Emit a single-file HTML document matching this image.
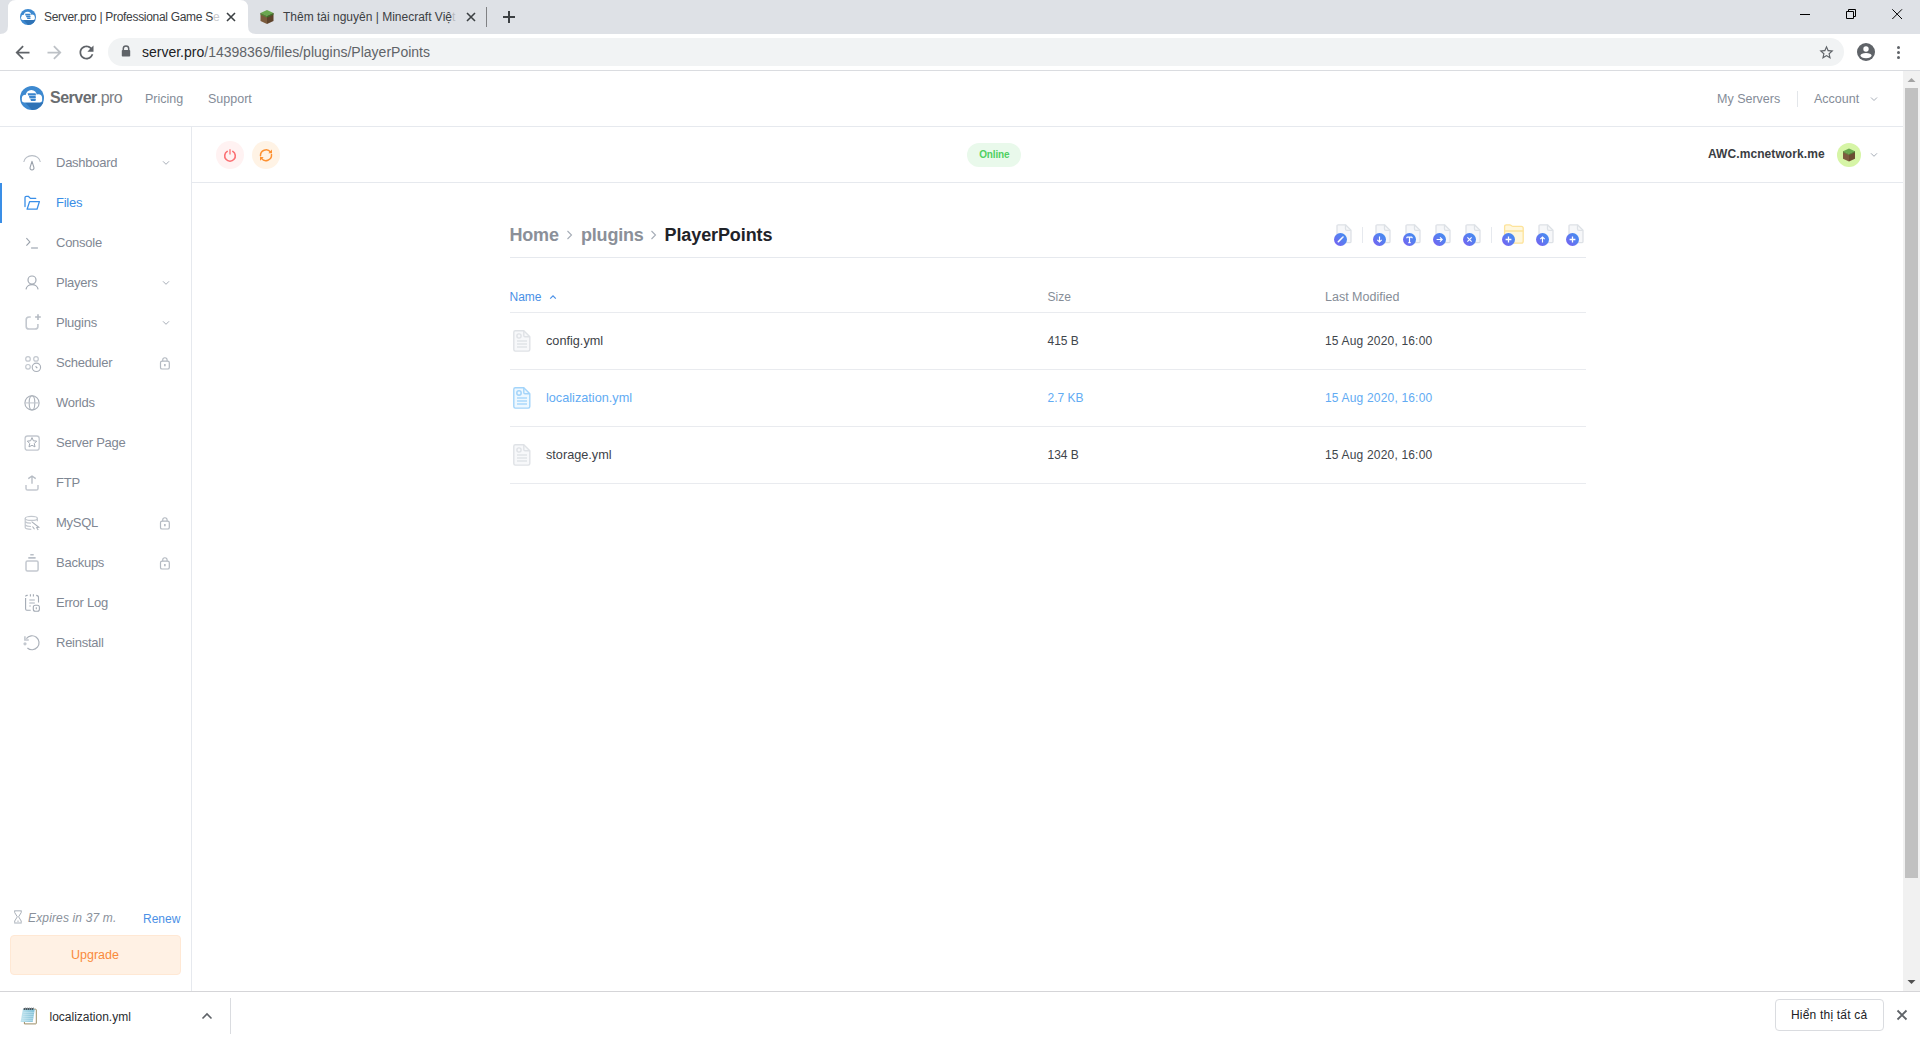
<!DOCTYPE html>
<html><head><meta charset="utf-8">
<style>
*{box-sizing:border-box;margin:0;padding:0}
html,body{width:1920px;height:1040px;overflow:hidden;background:#fff;font-family:"Liberation Sans",sans-serif;position:relative}
.a{position:absolute}
.t{position:absolute;white-space:nowrap;line-height:1}
svg{position:absolute;overflow:visible}
#tabbar{left:0;top:0;width:1920px;height:34px;background:#dee1e6}
#tbsep{left:0;top:70px;width:1920px;height:1px;background:#dadce0}
#omni{left:108px;top:38px;width:1736px;height:28px;border-radius:14px;background:#f1f3f4}
#hdr{left:0;top:126px;width:1903px;height:1px;background:#e6e9ee}
#side{left:191px;top:127px;width:1px;height:864px;background:#e6e9ee}
#ctl{left:192px;top:182px;width:1711px;height:1px;background:#e6e9ee}
#scroll{left:1903px;top:71px;width:17px;height:920px;background:#f1f1f1}
#shelf{left:0;top:991px;width:1920px;height:49px;background:#fff;border-top:1px solid #d5d5d8}
.ni{left:56px;font-size:13px;color:#7f8793;letter-spacing:-0.25px}
.si{left:16px}
.lk{left:159px}
.bdg{width:13px;height:13px;border-radius:50%;background:linear-gradient(45deg,#7a5cf2 0%,#5b7cf0 50%,#3d8ff0 100%)}
</style></head><body>
<!-- CHROME -->
<div id="tabbar" class="a"></div>
<svg style="left:0;top:0" width="260" height="34"><path d="M0 34 Q8 34 8 26 L8 8 Q8 0 16 0 L240 0 Q248 0 248 8 L248 26 Q248 34 256 34 Z" fill="#fff"/></svg>
<!-- favicon 1 -->
<svg style="left:20px;top:9px" width="16" height="16" viewBox="0 0 24 24"><defs><clipPath id="fc"><circle cx="12" cy="12" r="12"/></clipPath></defs><circle cx="12" cy="12" r="12" fill="#3d89d0"/><path d="M5.3 16.6 H25 V25 H12.8 Z" fill="#2f73b6" clip-path="url(#fc)"/><g fill="#fff"><circle cx="11.3" cy="9.5" r="5.5"/><circle cx="5.5" cy="12.4" r="3.6"/><circle cx="18.3" cy="12" r="3.8"/><path d="M1.9 12.4 H22.1 V14.3 Q22.1 16.6 19.8 16.6 H4.3 Q1.9 16.6 1.9 14.3 Z"/></g><g fill="#3a84cc"><path d="M7.6 7.2 H15.1 Q15.9 7.2 15.9 8.4 Q15.9 9.6 15.1 9.6 H8.2 Z"/><path d="M8.9 10 H15.1 Q15.9 10 15.9 11.15 Q15.9 12.3 15.1 12.3 H9.6 Z"/><path d="M10.2 12.7 H15.1 Q15.9 12.7 15.9 13.85 Q15.9 15 15.1 15 H11.1 Z"/></g></svg>
<div class="t" style="left:44px;top:11px;font-size:12px;letter-spacing:-0.3px;color:#3c4043">Server.pro | Professional Game S<span style="color:#c8c9cc">e</span></div>
<svg style="left:226px;top:12px" width="10" height="10" viewBox="0 0 10 10"><path d="M1 1L9 9M9 1L1 9" stroke="#3c4043" stroke-width="1.6"/></svg>
<!-- favicon 2 minecraft block -->
<svg style="left:259px;top:9px" width="16" height="16" viewBox="0 0 16 16"><path d="M8 1 L14.5 4 L8 7 L1.5 4Z" fill="#6aa84f"/><path d="M1.5 4 L8 7 L8 15 L1.5 12Z" fill="#7a5a3c"/><path d="M14.5 4 L8 7 L8 15 L14.5 12Z" fill="#5e432b"/><path d="M1.5 4 L8 7 L8 8.5 L1.5 5.5Z" fill="#4f8a36"/><path d="M14.5 4 L8 7 L8 8.5 L14.5 5.5Z" fill="#3e7228"/></svg>
<div class="t" style="left:283px;top:11px;font-size:12px;color:#3c4043">Thêm tài nguyên | Minecraft Việ<span style="color:#b9bbbf">t</span></div>
<svg style="left:466px;top:12px" width="10" height="10" viewBox="0 0 10 10"><path d="M1 1L9 9M9 1L1 9" stroke="#3c4043" stroke-width="1.6"/></svg>
<div class="a" style="left:486px;top:7px;width:1px;height:20px;background:#808184"></div>
<svg style="left:502px;top:10px" width="14" height="14" viewBox="0 0 14 14"><path d="M7 1V13M1 7H13" stroke="#3c4043" stroke-width="2"/></svg>
<!-- window controls -->
<div class="a" style="left:1800px;top:14px;width:10px;height:1px;background:#000"></div>
<svg style="left:1846px;top:9px" width="11" height="11" viewBox="0 0 11 11"><path d="M0.5 2.5H7.5V9.5H0.5Z M2.5 2.5V0.5H9.5V7.5H7.5" fill="none" stroke="#000" stroke-width="1"/></svg>
<svg style="left:1892px;top:9px" width="11" height="11" viewBox="0 0 11 11"><path d="M0.3 0.3L10 10M10 0.3L0.3 10" stroke="#000" stroke-width="1"/></svg>
<!-- toolbar -->
<svg style="left:11.5px;top:41.5px" width="21" height="21" viewBox="0 0 24 24"><path d="M20 11H7.83l5.59-5.59L12 4l-8 8 8 8 1.41-1.41L7.83 13H20v-2z" fill="#5f6368"/></svg>
<svg style="left:43.5px;top:41.5px" width="21" height="21" viewBox="0 0 24 24"><path d="M4 11h12.17l-5.59-5.59L12 4l8 8-8 8-1.41-1.41L16.17 13H4v-2z" fill="#bdc1c6"/></svg>
<svg style="left:75.5px;top:41.5px" width="21" height="21" viewBox="0 0 24 24"><path d="M17.65 6.35C16.2 4.9 14.21 4 12 4c-4.42 0-7.99 3.58-7.99 8s3.57 8 7.99 8c3.73 0 6.84-2.55 7.73-6h-2.08c-.82 2.33-3.04 4-5.65 4-3.31 0-6-2.69-6-6s2.69-6 6-6c1.66 0 3.14.69 4.22 1.78L13 11h7V4l-2.35 2.35z" fill="#5f6368"/></svg>
<div id="tbsep" class="a"></div>
<div id="omni" class="a"></div>
<svg style="left:121px;top:45px" width="10" height="12" viewBox="0 0 10 12"><path d="M2.3 5V3.6A2.7 2.7 0 0 1 7.7 3.6V5" fill="none" stroke="#5f6368" stroke-width="1.5"/><rect x="0.8" y="5" width="8.4" height="6.5" rx="0.8" fill="#5f6368"/></svg>
<div class="t" style="left:142px;top:45px;font-size:14px;color:#202124">server.pro<span style="color:#5f6368">/14398369/files/plugins/PlayerPoints</span></div>
<svg style="left:1817.5px;top:43.7px" width="17" height="17" viewBox="0 0 24 24"><path d="M22 9.24l-7.19-.62L12 2 9.19 8.63 2 9.24l5.46 4.73L5.82 21 12 17.27 18.18 21l-1.63-7.03L22 9.24zM12 15.4l-3.76 2.27 1-4.28-3.32-2.88 4.38-.38L12 6.1l1.71 4.04 4.38.38-3.32 2.88 1 4.28L12 15.4z" fill="#5f6368"/></svg>
<svg style="left:1857px;top:43px" width="18" height="18" viewBox="0 0 18 18"><circle cx="9" cy="9" r="9" fill="#5f6368"/><circle cx="9" cy="6" r="2.7" fill="#fff"/><ellipse cx="9" cy="12.6" rx="5.5" ry="2.6" fill="#fff"/></svg>
<div class="a" style="left:1896.5px;top:45.9px;width:3px;height:3px;border-radius:50%;background:#5f6368"></div>
<div class="a" style="left:1896.5px;top:51px;width:3px;height:3px;border-radius:50%;background:#5f6368"></div>
<div class="a" style="left:1896.5px;top:56.1px;width:3px;height:3px;border-radius:50%;background:#5f6368"></div>
<!-- PAGE -->
<div id="hdr" class="a"></div>
<div id="side" class="a"></div>
<div id="ctl" class="a"></div>
<!-- header -->
<svg style="left:20px;top:86px" width="24" height="24" viewBox="0 0 24 24"><defs><clipPath id="lc"><circle cx="12" cy="12" r="12"/></clipPath></defs><circle cx="12" cy="12" r="12" fill="#3d89d0"/><path d="M5.3 16.6 H25 V25 H12.8 Z" fill="#2f73b6" clip-path="url(#lc)"/><g fill="#fff"><circle cx="11.3" cy="9.5" r="5.5"/><circle cx="5.5" cy="12.4" r="3.6"/><circle cx="18.3" cy="12" r="3.8"/><path d="M1.9 12.4 H22.1 V14.3 Q22.1 16.6 19.8 16.6 H4.3 Q1.9 16.6 1.9 14.3 Z"/></g><g fill="#3a84cc"><path d="M7.6 7.2 H15.1 Q15.9 7.2 15.9 8.4 Q15.9 9.6 15.1 9.6 H8.2 Z"/><path d="M8.9 10 H15.1 Q15.9 10 15.9 11.15 Q15.9 12.3 15.1 12.3 H9.6 Z"/><path d="M10.2 12.7 H15.1 Q15.9 12.7 15.9 13.85 Q15.9 15 15.1 15 H11.1 Z"/></g><g fill="#9ec4ea"><rect x="8" y="9.6" width="8" height="0.4"/><rect x="9.4" y="12.3" width="6.6" height="0.4"/></g></svg>
<div class="t" style="left:50px;top:90px;font-size:16px;font-weight:bold;color:#6a6d71;letter-spacing:-0.5px">Server<span style="font-weight:normal;color:#7d8084;letter-spacing:-0.6px">.pro</span></div>
<div class="t nav2" style="left:145px;top:93px;font-size:12.5px;color:#848c98">Pricing</div>
<div class="t nav2" style="left:208px;top:93px;font-size:12.5px;color:#848c98">Support</div>
<div class="t" style="left:1717px;top:93px;font-size:12.5px;color:#848c98">My Servers</div>
<div class="a" style="left:1797px;top:91px;width:1px;height:16px;background:#e3e6ea"></div>
<div class="t" style="left:1814px;top:93px;font-size:12.5px;color:#848c98">Account</div>
<svg style="left:1870px;top:96px" width="8" height="6" viewBox="0 0 8 6"><path d="M1 1.5L4 4.5L7 1.5" fill="none" stroke="#a6adb7" stroke-width="1"/></svg>
<!-- sidebar -->
<div class="a" style="left:0;top:183px;width:2px;height:40px;background:#3a8ee6"></div>
<div id="nav">
<div class="t ni" style="top:156px">Dashboard</div>
<div class="t ni" style="top:196px;color:#3a8ee6">Files</div>
<div class="t ni" style="top:236px">Console</div>
<div class="t ni" style="top:276px">Players</div>
<div class="t ni" style="top:316px">Plugins</div>
<div class="t ni" style="top:356px">Scheduler</div>
<div class="t ni" style="top:396px">Worlds</div>
<div class="t ni" style="top:436px">Server Page</div>
<div class="t ni" style="top:476px">FTP</div>
<div class="t ni" style="top:516px">MySQL</div>
<div class="t ni" style="top:556px">Backups</div>
<div class="t ni" style="top:596px">Error Log</div>
<div class="t ni" style="top:636px">Reinstall</div>
</div>
<!-- sidebar icons (32x32 local grids) -->
<svg class="si" style="top:148px" width="32" height="32" viewBox="0 0 32 32"><path d="M7.8 14 A8.3 7.2 0 0 1 24.3 14" fill="none" stroke="#b7bdc5" stroke-width="1.1"/><path d="M16 13.3 L14.1 19.4 A2 2 0 1 0 17.9 19.4 Z" fill="none" stroke="#9aa1ab" stroke-width="1.1" stroke-linejoin="round"/></svg>
<svg class="si" style="top:188px" width="32" height="32" viewBox="0 0 32 32"><path d="M9 18.5 V9.6 Q9 8.3 10.3 8.3 H12.3 L14.4 10.4 H19.7" fill="none" stroke="#3a8fe8" stroke-width="1.3" stroke-linecap="round" stroke-linejoin="round"/><path d="M13.6 13.6 H23.4 L21 21.2 H11.1 Z" fill="none" stroke="#3a8fe8" stroke-width="1.3" stroke-linejoin="round"/></svg>
<svg class="si" style="top:228px" width="32" height="32" viewBox="0 0 32 32"><path d="M10.4 10.1 L13.9 13.9 L10.4 17.6" fill="none" stroke="#9aa1ab" stroke-width="1.1"/><rect x="15.1" y="19.1" width="6.8" height="1.8" fill="#bfc5cc"/></svg>
<svg class="si" style="top:268px" width="32" height="32" viewBox="0 0 32 32"><circle cx="16" cy="12" r="4" fill="none" stroke="#a3aab4" stroke-width="1.2"/><path d="M10 21.3 A6.1 5.4 0 0 1 22.1 21.3" fill="none" stroke="#a3aab4" stroke-width="1.2"/></svg>
<svg class="si" style="top:308px" width="32" height="32" viewBox="0 0 32 32"><path d="M14.8 9 H13 Q10.2 9 10.2 11.8 V18.4 Q10.2 21 13 21 H19 Q21.9 21 21.9 18.4 V16" fill="none" stroke="#c3c8cf" stroke-width="1.6"/><path d="M22 6.2 V11.9 M19.1 9 H24.8" stroke="#b5bbc3" stroke-width="1.6"/></svg>
<svg class="si" style="top:348px" width="32" height="32" viewBox="0 0 32 32"><circle cx="12" cy="10.9" r="2.3" fill="none" stroke="#c3c8cf" stroke-width="1.2"/><circle cx="20" cy="10.9" r="2.3" fill="none" stroke="#c3c8cf" stroke-width="1.2"/><circle cx="12" cy="18.8" r="2.3" fill="none" stroke="#c3c8cf" stroke-width="1.2"/><circle cx="20.4" cy="19.3" r="4.2" fill="none" stroke="#aab0b9" stroke-width="1.1"/><path d="M19.6 18.4 L21.3 20.1" stroke="#9aa1ab" stroke-width="1.1"/></svg>
<svg class="si" style="top:388px" width="32" height="32" viewBox="0 0 32 32"><circle cx="16" cy="14.9" r="7.1" fill="none" stroke="#aab0b9" stroke-width="1.1"/><ellipse cx="16" cy="14.9" rx="2.8" ry="7.1" fill="none" stroke="#aab0b9" stroke-width="1.1"/><path d="M8.9 14.9 H23.1" stroke="#c3c8cf" stroke-width="1.1"/></svg>
<svg class="si" style="top:428px" width="32" height="32" viewBox="0 0 32 32"><rect x="9.1" y="8" width="14.1" height="14.2" rx="2.5" fill="none" stroke="#c3c8cf" stroke-width="1.3"/><path d="M16 9.6 L17.4 12.8 L20.7 13.1 L18.3 15.5 L19 18.9 L16 17.3 L13 18.9 L13.7 15.5 L11.3 13.1 L14.6 12.8 Z" fill="none" stroke="#a3aab4" stroke-width="1" stroke-linejoin="round"/></svg>
<svg class="si" style="top:468px" width="32" height="32" viewBox="0 0 32 32"><path d="M16 8.3 V15.8 M12.3 10.6 L16 8 L19.7 10.6" fill="none" stroke="#b5bbc3" stroke-width="1.3"/><path d="M10 17 V20.4 Q10 22.1 11.7 22.1 H20.3 Q22 22.1 22 20.4 V17" fill="none" stroke="#c3c8cf" stroke-width="1.5"/></svg>
<svg class="si" style="top:508px" width="32" height="32" viewBox="0 0 32 32"><ellipse cx="15.3" cy="10.4" rx="6.1" ry="2" fill="none" stroke="#c3c8cf" stroke-width="1.2"/><path d="M9.2 10.4 V19.6 Q9.2 21.3 15.3 21.3 M21.4 10.4 V13.3 M9.2 13.7 Q11 15.3 15 15.2 M9.2 17 Q11 18.6 15 18.5" fill="none" stroke="#c3c8cf" stroke-width="1.2"/><path d="M15.6 13.6 L22.8 19.3 L20.7 19.7 L22.2 22 M16.5 18.5 L18.5 21.3" fill="none" stroke="#aab0b9" stroke-width="1.1"/></svg>
<svg class="si" style="top:548px" width="32" height="32" viewBox="0 0 32 32"><path d="M14.3 6.8 H17.7 M12.3 9.9 H19.6" stroke="#b9bfc7" stroke-width="1.6"/><rect x="10" y="13.1" width="12.1" height="10" rx="1.5" fill="none" stroke="#c3c8cf" stroke-width="1.5"/></svg>
<svg class="si" style="top:588px" width="32" height="32" viewBox="0 0 32 32"><path d="M11.7 7.4 H10.8 Q9.6 7.4 9.6 8.6 M9.6 10 V20.8 Q9.6 22.3 10.8 22.3 H14.7 M20.2 7.4 Q22.5 7.4 22.5 9.5 V14.6" fill="none" stroke="#a3aab4" stroke-width="1.1"/><path d="M14.4 6.2 V8.4 M17.4 6.2 V8.4" stroke="#a3aab4" stroke-width="1.1"/><path d="M13.3 12 H18.8 M13.3 15 H18.8 M13.3 18 H14.8" stroke="#c6cbd2" stroke-width="1.5"/><rect x="17.3" y="17.2" width="6.1" height="6.1" rx="2" fill="none" stroke="#a3aab4" stroke-width="1.1"/><path d="M20.3 19.2 V21.2" stroke="#a3aab4" stroke-width="1.1"/></svg>
<svg class="si" style="top:628px" width="32" height="32" viewBox="0 0 32 32"><path d="M10.4 10.6 A7 7 0 1 1 11.4 20" fill="none" stroke="#aab0b9" stroke-width="1.2"/><path d="M8.9 8.2 V12 H12.8" fill="none" stroke="#c3c8cf" stroke-width="1.6"/><circle cx="9" cy="15.8" r="1.6" fill="#c3c8cf"/></svg>
<!-- chevrons & locks -->
<svg class="a" style="left:162px;top:160px" width="8" height="6" viewBox="0 0 8 6"><path d="M1 1.3L4 4.3L7 1.3" fill="none" stroke="#a6adb7" stroke-width="1"/></svg>
<svg class="a" style="left:162px;top:280px" width="8" height="6" viewBox="0 0 8 6"><path d="M1 1.3L4 4.3L7 1.3" fill="none" stroke="#a6adb7" stroke-width="1"/></svg>
<svg class="a" style="left:162px;top:320px" width="8" height="6" viewBox="0 0 8 6"><path d="M1 1.3L4 4.3L7 1.3" fill="none" stroke="#a6adb7" stroke-width="1"/></svg>
<svg class="lk" style="top:355px" width="12" height="16" viewBox="0 0 12 16"><path d="M3.7 6.3 V4.9 A2.2 2.2 0 0 1 8.1 4.9 V6.3" fill="none" stroke="#b3b9c1" stroke-width="1.1"/><rect x="1.5" y="6.2" width="8.8" height="7.8" rx="1.6" fill="none" stroke="#b3b9c1" stroke-width="1.2"/><path d="M5.9 8.9 V11.3" stroke="#9aa1ab" stroke-width="1.2"/></svg>
<svg class="lk" style="top:515px" width="12" height="16" viewBox="0 0 12 16"><path d="M3.7 6.3 V4.9 A2.2 2.2 0 0 1 8.1 4.9 V6.3" fill="none" stroke="#b3b9c1" stroke-width="1.1"/><rect x="1.5" y="6.2" width="8.8" height="7.8" rx="1.6" fill="none" stroke="#b3b9c1" stroke-width="1.2"/><path d="M5.9 8.9 V11.3" stroke="#9aa1ab" stroke-width="1.2"/></svg>
<svg class="lk" style="top:555px" width="12" height="16" viewBox="0 0 12 16"><path d="M3.7 6.3 V4.9 A2.2 2.2 0 0 1 8.1 4.9 V6.3" fill="none" stroke="#b3b9c1" stroke-width="1.1"/><rect x="1.5" y="6.2" width="8.8" height="7.8" rx="1.6" fill="none" stroke="#b3b9c1" stroke-width="1.2"/><path d="M5.9 8.9 V11.3" stroke="#9aa1ab" stroke-width="1.2"/></svg>
<!-- sidebar bottom -->
<svg class="a" style="left:13px;top:910px" width="10" height="14" viewBox="0 0 10 14"><path d="M1.2 0.7 H8.7 M1.2 13 H8.7" stroke="#c6cbd2" stroke-width="1.4"/><path d="M1.7 1 V2.6 L4.3 6.8 L1.7 11 V12.6 M8.2 1 V2.6 L5.6 6.8 L8.2 11 V12.6" fill="none" stroke="#aab0b9" stroke-width="1"/><rect x="4.3" y="10.6" width="1.4" height="1.2" fill="#b9bfc7"/></svg>
<div class="t" style="left:28px;top:912px;font-size:12px;font-style:italic;letter-spacing:0.15px;color:#8a919b">Expires in 37 m.</div>
<div class="t" style="left:143px;top:913px;font-size:12px;color:#4a90e6">Renew</div>
<div class="a" style="left:10px;top:935px;width:171px;height:40px;border-radius:4px;background:#fff1e4;border:1px solid #ffe8d4"></div>
<div class="t" style="left:71px;top:949px;font-size:12.5px;color:#f98a3b">Upgrade</div>
<!-- MAIN -->
<div class="a" style="left:216px;top:141px;width:28px;height:28px;border-radius:50%;background:#fff2f2"></div>
<svg class="a" style="left:222px;top:147px" width="16" height="16" viewBox="0 0 16 16"><path d="M5.2 4.4 A5.3 5.3 0 1 0 10.8 4.4" fill="none" stroke="#fb6f73" stroke-width="1.6" stroke-linecap="round"/><path d="M8 2.2 V7.6" stroke="#fb8a8d" stroke-width="1.6"/></svg>
<div class="a" style="left:252px;top:141px;width:28px;height:28px;border-radius:50%;background:#fff3e5"></div>
<svg class="a" style="left:258px;top:147px" width="16" height="16" viewBox="0 0 16 16"><path d="M2.5 8.8 A5.6 5.6 0 0 1 12.5 5" fill="none" stroke="#fd9030" stroke-width="1.5" stroke-linecap="round"/><path d="M14 2.6 V6.3 H10.3 Z" fill="#fd9030"/><path d="M13.5 7.6 A5.6 5.6 0 0 1 3.5 11.4" fill="none" stroke="#fd9030" stroke-width="1.5" stroke-linecap="round"/><path d="M2 13.8 V10.1 H5.7 Z" fill="#fd9030"/></svg>
<div class="a" style="left:967px;top:143px;width:54px;height:24px;border-radius:12px;background:#e9f9eb"></div>
<div class="t" style="left:979.2px;top:150px;font-size:10px;letter-spacing:-0.15px;font-weight:bold;color:#4fd062">Online</div>
<div class="t" style="left:1708px;top:148px;font-size:12px;font-weight:bold;letter-spacing:0.08px;color:#3a3d42">AWC.mcnetwork.me</div>
<div class="a" style="left:1837px;top:143px;width:24px;height:24px;border-radius:50%;background:#d6f5a6"></div>
<svg class="a" style="left:1842px;top:148px" width="14" height="14" viewBox="0 0 14 14"><path d="M7 0.5 L13 3.3 L7 6.1 L1 3.3Z" fill="#6aa84f"/><path d="M1 3.3 L7 6.1 L7 13.5 L1 10.7Z" fill="#7d5b40"/><path d="M13 3.3 L7 6.1 L7 13.5 L13 10.7Z" fill="#6b4b31"/><path d="M1 3.3 L7 6.1 L7 7 L1 4.3Z" fill="#5c9a43"/><path d="M13 3.3 L7 6.1 L7 7 L13 4.3Z" fill="#4f8a38"/></svg>
<svg class="a" style="left:1870px;top:152px" width="8" height="6" viewBox="0 0 8 6"><path d="M1 1.3L4 4.3L7 1.3" fill="none" stroke="#a6adb7" stroke-width="1"/></svg>
<!-- breadcrumb -->
<div class="t" style="left:509.5px;top:226px;font-size:18px;font-weight:bold;color:#8b9099;letter-spacing:-0.2px">Home</div>
<svg class="a" style="left:566px;top:230px" width="8" height="10" viewBox="0 0 8 10"><path d="M1.5 1L5.5 5L1.5 9" fill="none" stroke="#a6adb7" stroke-width="1.1"/></svg>
<div class="t" style="left:581px;top:226px;font-size:18px;font-weight:bold;color:#8b9099;letter-spacing:-0.2px">plugins</div>
<svg class="a" style="left:650px;top:230px" width="8" height="10" viewBox="0 0 8 10"><path d="M1.5 1L5.5 5L1.5 9" fill="none" stroke="#a6adb7" stroke-width="1.1"/></svg>
<div class="t" style="left:664.5px;top:226px;font-size:18px;font-weight:bold;color:#1f2329;letter-spacing:-0.1px">PlayerPoints</div>
<div class="a" style="left:510px;top:257px;width:1076px;height:1px;background:#e6e9ee"></div>
<!-- toolbar icons -->
<div id="tools"><svg class="a" style="left:1336px;top:224px" width="17" height="20" viewBox="0 0 17 20"><path d="M2.2 0.8 H9.5 L15 6.3 V17.5 Q15 18.7 13.8 18.7 H2.2 Q1 18.7 1 17.5 V2 Q1 0.8 2.2 0.8Z" fill="#f6f7f9" stroke="#dde1e6" stroke-width="1.3" stroke-linejoin="round"/><path d="M9.5 0.8 V5 Q9.5 6.3 10.8 6.3 H15" fill="none" stroke="#dde1e6" stroke-width="1.3"/></svg><svg class="a" style="left:1375px;top:224px" width="17" height="20" viewBox="0 0 17 20"><path d="M2.2 0.8 H9.5 L15 6.3 V17.5 Q15 18.7 13.8 18.7 H2.2 Q1 18.7 1 17.5 V2 Q1 0.8 2.2 0.8Z" fill="#f6f7f9" stroke="#dde1e6" stroke-width="1.3" stroke-linejoin="round"/><path d="M9.5 0.8 V5 Q9.5 6.3 10.8 6.3 H15" fill="none" stroke="#dde1e6" stroke-width="1.3"/></svg><svg class="a" style="left:1405px;top:224px" width="17" height="20" viewBox="0 0 17 20"><path d="M2.2 0.8 H9.5 L15 6.3 V17.5 Q15 18.7 13.8 18.7 H2.2 Q1 18.7 1 17.5 V2 Q1 0.8 2.2 0.8Z" fill="#f6f7f9" stroke="#dde1e6" stroke-width="1.3" stroke-linejoin="round"/><path d="M9.5 0.8 V5 Q9.5 6.3 10.8 6.3 H15" fill="none" stroke="#dde1e6" stroke-width="1.3"/></svg><svg class="a" style="left:1435.4px;top:224px" width="17" height="20" viewBox="0 0 17 20"><path d="M2.2 0.8 H9.5 L15 6.3 V17.5 Q15 18.7 13.8 18.7 H2.2 Q1 18.7 1 17.5 V2 Q1 0.8 2.2 0.8Z" fill="#f6f7f9" stroke="#dde1e6" stroke-width="1.3" stroke-linejoin="round"/><path d="M9.5 0.8 V5 Q9.5 6.3 10.8 6.3 H15" fill="none" stroke="#dde1e6" stroke-width="1.3"/></svg><svg class="a" style="left:1465.1px;top:224px" width="17" height="20" viewBox="0 0 17 20"><path d="M2.2 0.8 H9.5 L15 6.3 V17.5 Q15 18.7 13.8 18.7 H2.2 Q1 18.7 1 17.5 V2 Q1 0.8 2.2 0.8Z" fill="#f6f7f9" stroke="#dde1e6" stroke-width="1.3" stroke-linejoin="round"/><path d="M9.5 0.8 V5 Q9.5 6.3 10.8 6.3 H15" fill="none" stroke="#dde1e6" stroke-width="1.3"/></svg><svg class="a" style="left:1503px;top:224px" width="22" height="21" viewBox="0 0 22 21"><path d="M1.6 2.6 Q1.6 0.8 3.4 0.8 H6.6 Q7.6 0.8 8.4 1.6 Q9.2 2.4 10.2 2.4 H18.3 Q20.2 2.4 20.2 4.3 V17.3 Q20.2 19.2 18.3 19.2 H3.5 Q1.6 19.2 1.6 17.3Z" fill="#fff7dc" stroke="#fde39a" stroke-width="1.3"/><path d="M1.6 7 H20.2" stroke="#fde39a" stroke-width="1.5"/></svg><svg class="a" style="left:1538px;top:224px" width="17" height="20" viewBox="0 0 17 20"><path d="M2.2 0.8 H9.5 L15 6.3 V17.5 Q15 18.7 13.8 18.7 H2.2 Q1 18.7 1 17.5 V2 Q1 0.8 2.2 0.8Z" fill="#f6f7f9" stroke="#dde1e6" stroke-width="1.3" stroke-linejoin="round"/><path d="M9.5 0.8 V5 Q9.5 6.3 10.8 6.3 H15" fill="none" stroke="#dde1e6" stroke-width="1.3"/></svg><svg class="a" style="left:1568.3px;top:224px" width="17" height="20" viewBox="0 0 17 20"><path d="M2.2 0.8 H9.5 L15 6.3 V17.5 Q15 18.7 13.8 18.7 H2.2 Q1 18.7 1 17.5 V2 Q1 0.8 2.2 0.8Z" fill="#f6f7f9" stroke="#dde1e6" stroke-width="1.3" stroke-linejoin="round"/><path d="M9.5 0.8 V5 Q9.5 6.3 10.8 6.3 H15" fill="none" stroke="#dde1e6" stroke-width="1.3"/></svg><div class="a bdg" style="left:1334.0px;top:233px"></div><svg class="a" style="left:1334.0px;top:233px" width="13" height="13" viewBox="0 0 13 13"><path d="M4.3 8.7 L8.2 4.8" stroke="#fff" stroke-width="1.6" stroke-linecap="round"/><circle cx="9" cy="4" r="0.8" fill="#fff"/></svg><div class="a bdg" style="left:1373.0px;top:233px"></div><svg class="a" style="left:1373.0px;top:233px" width="13" height="13" viewBox="0 0 13 13"><path d="M6.5 3.5 V9 M4.3 6.8 L6.5 9 L8.7 6.8" fill="none" stroke="#fff" stroke-width="1.15"/></svg><div class="a bdg" style="left:1403.0px;top:233px"></div><svg class="a" style="left:1403.0px;top:233px" width="13" height="13" viewBox="0 0 13 13"><path d="M3.8 4.2 H9.2 M6.5 4.2 V9.6 M5.3 9.6 H7.7 M3.8 4.2 V5.2 M9.2 4.2 V5.2" fill="none" stroke="#fff" stroke-width="1.2"/></svg><div class="a bdg" style="left:1433.4px;top:233px"></div><svg class="a" style="left:1433.4px;top:233px" width="13" height="13" viewBox="0 0 13 13"><path d="M3.6 6.5 H9.2 M7 4.3 L9.2 6.5 L7 8.7" fill="none" stroke="#fff" stroke-width="1.15"/></svg><div class="a bdg" style="left:1462.6px;top:233px"></div><svg class="a" style="left:1462.6px;top:233px" width="13" height="13" viewBox="0 0 13 13"><path d="M4.4 4.4 L8.6 8.6 M8.6 4.4 L4.4 8.6" stroke="#fff" stroke-width="1.15"/></svg><div class="a bdg" style="left:1501.8px;top:233px"></div><svg class="a" style="left:1501.8px;top:233px" width="13" height="13" viewBox="0 0 13 13"><path d="M6.5 3.6 V9.4 M3.6 6.5 H9.4" stroke="#fff" stroke-width="1.3"/></svg><div class="a bdg" style="left:1536.0px;top:233px"></div><svg class="a" style="left:1536.0px;top:233px" width="13" height="13" viewBox="0 0 13 13"><path d="M6.5 9.5 V4 M4.3 6.2 L6.5 4 L8.7 6.2" fill="none" stroke="#fff" stroke-width="1.15"/></svg><div class="a bdg" style="left:1566.3px;top:233px"></div><svg class="a" style="left:1566.3px;top:233px" width="13" height="13" viewBox="0 0 13 13"><path d="M6.5 3.6 V9.4 M3.6 6.5 H9.4" stroke="#fff" stroke-width="1.3"/></svg></div>
<div class="a" style="left:1362px;top:227px;width:1px;height:16px;background:#e6e9ee"></div>
<div class="a" style="left:1491px;top:227px;width:1px;height:16px;background:#e6e9ee"></div>
<!-- table -->
<div class="t" style="left:509.5px;top:291px;font-size:12px;color:#4a90e6">Name</div>
<svg class="a" style="left:548px;top:293px" width="10" height="8" viewBox="0 0 10 8"><path d="M2.2 5.6L5 2.8L7.8 5.6" fill="none" stroke="#4a90e6" stroke-width="1.2"/></svg>
<div class="t" style="left:1047.5px;top:291px;font-size:12px;color:#868d97">Size</div>
<div class="t" style="left:1325px;top:291px;font-size:12.5px;color:#868d97">Last Modified</div>
<div class="a" style="left:510px;top:312px;width:1076px;height:1px;background:#e9ebef"></div>
<div class="a" style="left:510px;top:369px;width:1076px;height:1px;background:#e9ebef"></div>
<div class="a" style="left:510px;top:426px;width:1076px;height:1px;background:#e9ebef"></div>
<div class="a" style="left:510px;top:483px;width:1076px;height:1px;background:#e9ebef"></div>
<div id="rows">
<div class="t" style="left:546px;top:334.5px;font-size:12.7px;color:#3d4248">config.yml</div>
<div class="t" style="left:1047.5px;top:334.5px;font-size:12px;color:#40454b">415 B</div>
<div class="t" style="left:1325px;top:334.5px;font-size:12px;letter-spacing:0.18px;color:#40454b">15 Aug 2020, 16:00</div>
<div class="t" style="left:546px;top:391.5px;font-size:12.7px;color:#62abf3">localization.yml</div>
<div class="t" style="left:1047.5px;top:391.5px;font-size:12px;color:#62abf3">2.7 KB</div>
<div class="t" style="left:1325px;top:391.5px;font-size:12px;letter-spacing:0.18px;color:#62abf3">15 Aug 2020, 16:00</div>
<div class="t" style="left:546px;top:448.5px;font-size:12.7px;color:#3d4248">storage.yml</div>
<div class="t" style="left:1047.5px;top:448.5px;font-size:12px;color:#40454b">134 B</div>
<div class="t" style="left:1325px;top:448.5px;font-size:12px;letter-spacing:0.18px;color:#40454b">15 Aug 2020, 16:00</div>
</div>
<div id="docs"><svg class="a" style="left:505px;top:325px" width="40" height="40" viewBox="0 0 40 40"><path d="M10.3 5.8 H18.8 L24.8 11.8 V24.6 Q24.8 26.1 23.3 26.1 H10.3 Q8.8 26.1 8.8 24.6 V7.3 Q8.8 5.8 10.3 5.8Z" fill="#f7f8fa" stroke="#dfe2e6" stroke-width="1.4" stroke-linejoin="round"/><path d="M18.8 5.8 V10.6 Q18.8 11.8 20 11.8 H24.8" fill="none" stroke="#dfe2e6" stroke-width="1.4"/><circle cx="14" cy="11" r="2.1" fill="none" stroke="#dfe2e6" stroke-width="1.4"/><path d="M12 16 H22 M12 19 H22 M12 22 H22" stroke="#e1e4e8" stroke-width="1.5"/></svg><svg class="a" style="left:505px;top:382px" width="40" height="40" viewBox="0 0 40 40"><path d="M10.3 5.8 H18.8 L24.8 11.8 V24.6 Q24.8 26.1 23.3 26.1 H10.3 Q8.8 26.1 8.8 24.6 V7.3 Q8.8 5.8 10.3 5.8Z" fill="#eef8ff" stroke="#a3d4fa" stroke-width="1.4" stroke-linejoin="round"/><path d="M18.8 5.8 V10.6 Q18.8 11.8 20 11.8 H24.8" fill="none" stroke="#a3d4fa" stroke-width="1.4"/><circle cx="14" cy="11" r="2.2" fill="none" stroke="#a3d4fa" stroke-width="1.5"/><path d="M12 16 H22 M12 19 H22 M12 22 H22" stroke="#aad8fb" stroke-width="1.5"/></svg><svg class="a" style="left:505px;top:439px" width="40" height="40" viewBox="0 0 40 40"><path d="M10.3 5.8 H18.8 L24.8 11.8 V24.6 Q24.8 26.1 23.3 26.1 H10.3 Q8.8 26.1 8.8 24.6 V7.3 Q8.8 5.8 10.3 5.8Z" fill="#f7f8fa" stroke="#dfe2e6" stroke-width="1.4" stroke-linejoin="round"/><path d="M18.8 5.8 V10.6 Q18.8 11.8 20 11.8 H24.8" fill="none" stroke="#dfe2e6" stroke-width="1.4"/><circle cx="14" cy="11" r="2.1" fill="none" stroke="#dfe2e6" stroke-width="1.4"/><path d="M12 16 H22 M12 19 H22 M12 22 H22" stroke="#e1e4e8" stroke-width="1.5"/></svg></div>
<!-- scrollbar -->
<div id="scroll" class="a"></div>
<svg class="a" style="left:1907px;top:77px" width="9" height="6" viewBox="0 0 9 6"><path d="M0.5 5 L4.5 1 L8.5 5Z" fill="#a3a3a3"/></svg>
<div class="a" style="left:1905px;top:88px;width:13px;height:790px;background:#c1c1c1"></div>
<svg class="a" style="left:1907px;top:979px" width="9" height="6" viewBox="0 0 9 6"><path d="M0.5 1 L4.5 5 L8.5 1Z" fill="#505050"/></svg>
<!-- shelf -->
<div id="shelf" class="a"></div>
<svg class="a" style="left:14px;top:1000.8px" width="30" height="30" viewBox="0 0 30 30"><defs><linearGradient id="np" x1="0" y1="0" x2="1" y2="0"><stop offset="0" stop-color="#c4e6f0"/><stop offset="0.5" stop-color="#9fd2e3"/><stop offset="1" stop-color="#7fc0d6"/></linearGradient></defs><path d="M10.4 8.2 H21.6 Q22.3 8.2 22.3 9 V22.2 Q22.3 22.9 21.6 22.9 H10.4 Z" fill="#fff" stroke="#8f7f52" stroke-width="0.9"/><path d="M8.9 8.1 H20.8 L18.7 20.9 H6.6 Z" fill="url(#np)"/><path d="M9.6 11.6 H20.2 M9.2 13.6 H19.9 M8.8 15.6 H19.6 M8.4 17.6 H19.2 M8 19.4 H18.9" stroke="#d8eff6" stroke-width="0.6" opacity="0.8"/><g fill="#3d4a52"><circle cx="10.4" cy="8" r="0.95"/><circle cx="12.4" cy="8" r="0.95"/><circle cx="14.4" cy="8" r="0.95"/><circle cx="16.4" cy="8" r="0.95"/><circle cx="18.5" cy="8" r="0.95"/></g><g fill="#6a7780"><circle cx="11.3" cy="7.1" r="0.6"/><circle cx="13.3" cy="7.1" r="0.6"/><circle cx="15.3" cy="7.1" r="0.6"/><circle cx="17.3" cy="7.1" r="0.6"/><circle cx="19.4" cy="7.1" r="0.6"/></g></svg>
<div class="t" style="left:49.5px;top:1011px;font-size:12px;color:#2a2c30">localization.yml</div>
<svg class="a" style="left:201px;top:1012px" width="12" height="8" viewBox="0 0 12 8"><path d="M1.5 6.5L6 2L10.5 6.5" fill="none" stroke="#5f6368" stroke-width="1.6"/></svg>
<div class="a" style="left:230px;top:998px;width:1px;height:36px;background:#dadce0"></div>
<div class="a" style="left:1775px;top:999px;width:109px;height:32px;border-radius:4px;border:1px solid #dadce0;background:#fff"></div>
<div class="t" style="left:1791px;top:1009px;font-size:12px;letter-spacing:0.2px;color:#202124">Hiển thị tất cả</div>
<svg class="a" style="left:1896px;top:1009px" width="12" height="12" viewBox="0 0 12 12"><path d="M1.5 1.5L10.5 10.5M10.5 1.5L1.5 10.5" stroke="#5f6368" stroke-width="1.8"/></svg>
</body></html>
